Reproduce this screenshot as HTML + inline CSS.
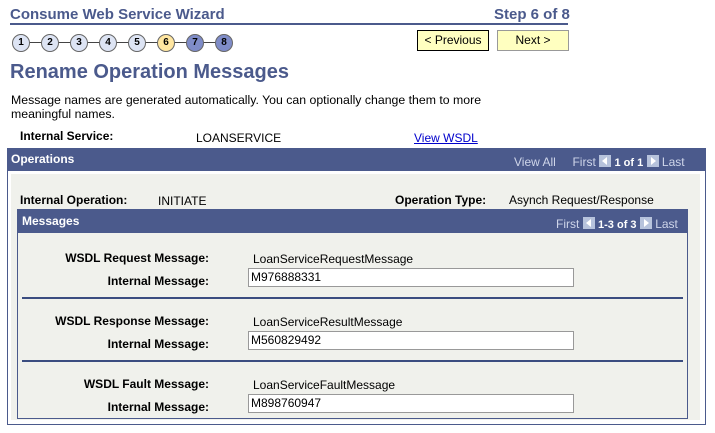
<!DOCTYPE html>
<html><head><style>
body{margin:0;width:715px;height:433px;background:#fff;font-family:"Liberation Sans",Arial,sans-serif;position:relative;overflow:hidden;font-size:12px;color:#000}
.a{position:absolute;white-space:nowrap}
.b{font-weight:bold}
.c{position:absolute;width:16px;height:16px;border:1px solid #666;border-radius:50%;background:#dde4f4;font-size:10px;font-weight:bold;text-align:center;line-height:16px;top:34px}
.ln{position:absolute;top:42px;height:1px;background:#444}
.btn{position:absolute;top:30px;height:19px;background:#ffffc0;border:1px solid #999;font-size:12px;text-align:center;line-height:19px}
.bar{position:absolute;background:#4b5a8c;color:#fff}
.inp{position:absolute;left:248px;width:322px;height:17px;border:1px solid #999;background:#fff;font-size:12px;line-height:17px;padding-left:2px;box-sizing:content-box}
.sep{position:absolute;left:22px;width:661px;height:2px;background:#3b4d80}
.nav{color:#cfd6ea}
.arr{display:inline-block;width:12px;height:12px;background:#b7c3dc;vertical-align:-1px;position:relative}
.arr::after{content:"";position:absolute;top:2px;border-top:4px solid transparent;border-bottom:4px solid transparent}
.l::after{left:3px;border-right:5px solid #fff}
.r::after{left:4px;border-left:5px solid #fff}
</style></head><body>
<div class="a b" style="left:10px;top:6px;font-size:15px;color:#4b5a8c">Consume Web Service Wizard</div>
<div class="a b" style="left:494px;top:6px;font-size:15px;color:#4b5a8c">Step 6 of 8</div>
<div style="position:absolute;left:10px;top:23px;width:558px;height:2px;background:#4b5a8c"></div>
<div class="ln" style="left:20px;width:200px"></div>
<div class="c" style="left:12px">1</div>
<div class="c" style="left:41px">2</div>
<div class="c" style="left:70px">3</div>
<div class="c" style="left:99px">4</div>
<div class="c" style="left:128px">5</div>
<div class="c" style="left:157px;background:#ffe6a0">6</div>
<div class="c" style="left:186px;background:#7f8cc8">7</div>
<div class="c" style="left:215px;background:#7f8cc8">8</div>
<div class="btn" style="left:417px;width:70px;border:1px solid #000">&lt; Previous</div>
<div class="btn" style="left:497px;width:70px">Next &gt;</div>
<div class="a b" style="left:10px;top:61px;font-size:20px;color:#4b5a8c">Rename Operation Messages</div>
<div class="a" style="left:11px;top:93px;line-height:14px;font-size:12.3px">Message names are generated automatically. You can optionally change them to more<br>meaningful names.</div>
<div class="a b" style="left:20px;top:129px">Internal Service:</div>
<div class="a" style="left:196px;top:131px">LOANSERVICE</div>
<div class="a" style="left:414px;top:131px;color:#00c;text-decoration:underline">View WSDL</div>
<div style="position:absolute;left:7px;top:148px;width:697px;height:275px;border:1px solid #4b5a8c;background:#fff"></div>
<div class="bar" style="left:7px;top:148px;width:699px;height:23px"></div>
<div class="a b" style="left:11px;top:152px;color:#fff">Operations</div>
<div class="a nav" style="left:514px;top:155px">View All &nbsp; &nbsp; First <span class="arr l"></span> <b style="color:#fff;font-size:11px">1 of 1</b> <span class="arr r"></span> Last</div>
<div style="position:absolute;left:11px;top:174px;width:689px;height:246px;background:#f0f1ec"></div>
<div class="a b" style="left:20px;top:193px">Internal Operation:</div>
<div class="a" style="left:158px;top:194px">INITIATE</div>
<div class="a b" style="left:395px;top:193px">Operation Type:</div>
<div class="a" style="left:509px;top:193px">Asynch Request/Response</div>
<div style="position:absolute;left:17px;top:209px;width:669px;height:208px;border:1px solid #4b5a8c"></div>
<div class="bar" style="left:17px;top:209px;width:671px;height:24px"></div>
<div class="a b" style="left:22px;top:214px;color:#fff">Messages</div>
<div class="a nav" style="left:556px;top:217px">First <span class="arr l"></span> <b style="color:#fff;font-size:11px">1-3 of 3</b> <span class="arr r"></span> Last</div>
<div class="a b" style="right:506px;top:251px">WSDL Request Message:</div>
<div class="a" style="left:253px;top:252px">LoanServiceRequestMessage</div>
<div class="a b" style="right:506px;top:274px">Internal Message:</div>
<div class="inp" style="top:268px">M976888331</div>
<div class="sep" style="top:297px"></div>
<div class="a b" style="right:506px;top:314px">WSDL Response Message:</div>
<div class="a" style="left:253px;top:315px">LoanServiceResultMessage</div>
<div class="a b" style="right:506px;top:337px">Internal Message:</div>
<div class="inp" style="top:331px">M560829492</div>
<div class="sep" style="top:360px"></div>
<div class="a b" style="right:506px;top:377px">WSDL Fault Message:</div>
<div class="a" style="left:253px;top:378px">LoanServiceFaultMessage</div>
<div class="a b" style="right:506px;top:400px">Internal Message:</div>
<div class="inp" style="top:394px">M898760947</div>
</body></html>
